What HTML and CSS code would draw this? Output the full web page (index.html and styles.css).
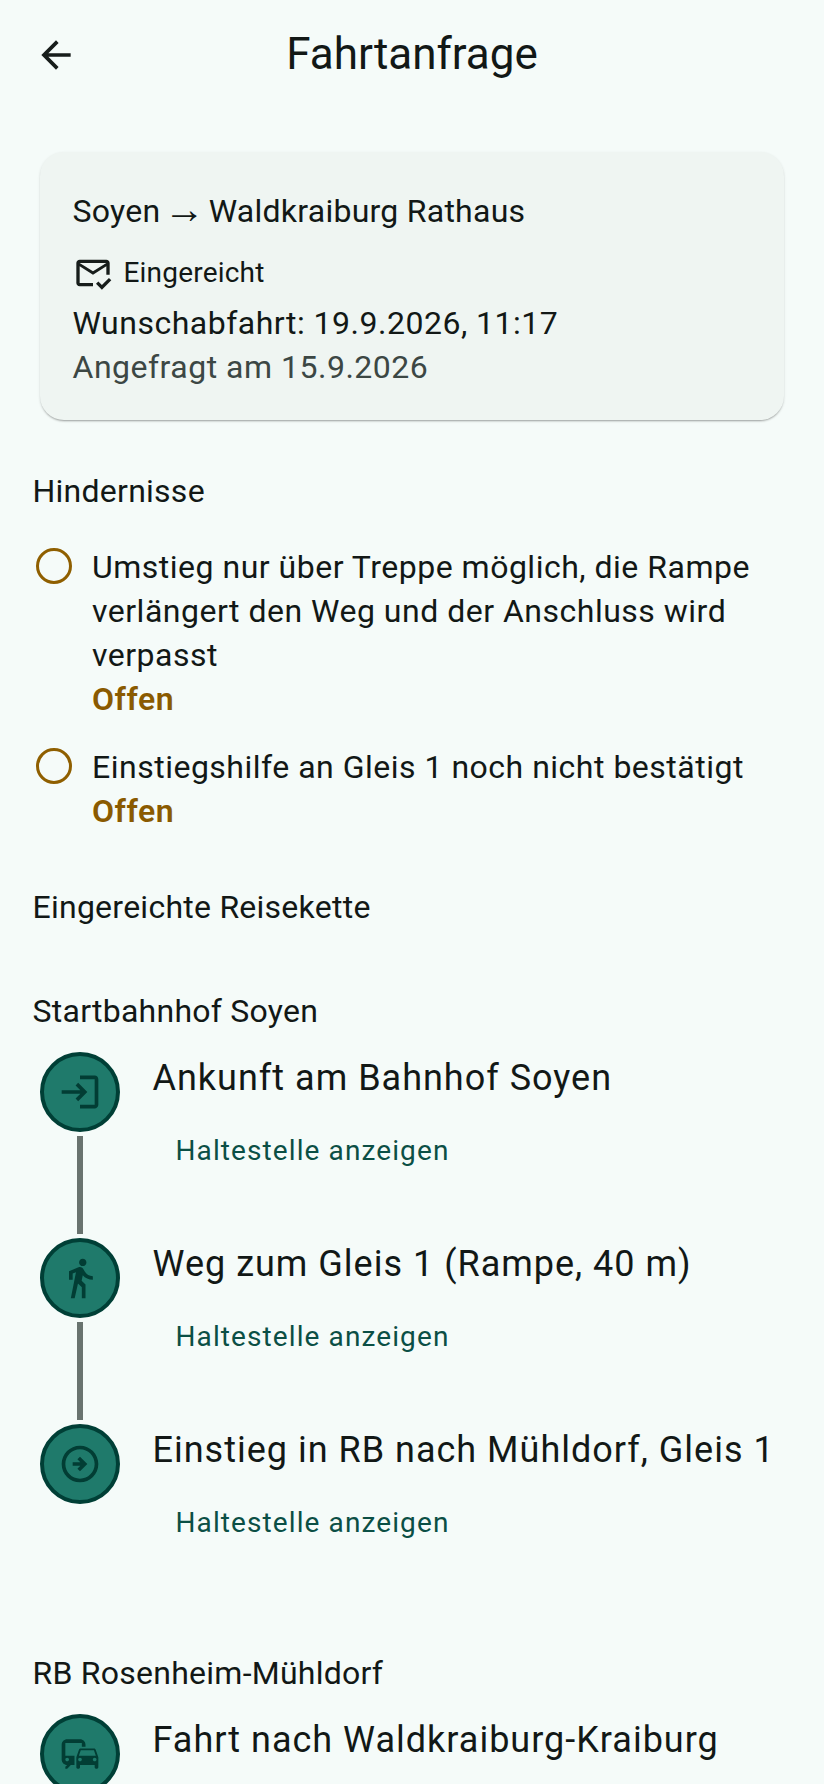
FILE: index.html
```html
<!DOCTYPE html>
<html lang="de">
<head>
	<meta charset="utf-8">
	<meta name="viewport" content="width=device-width, initial-scale=1">
	<title>Fahrtanfrage</title>
	<link rel="stylesheet" href="styles.css">
</head>
<body>
	<div class="page">
		<header class="topbar">
			<svg class="back" viewBox="0 0 24 24"><path d="M20 11H7.83l5.59-5.59L12 4l-8 8 8 8 1.41-1.41L7.83 13H20z"/></svg>
			<h1>Fahrtanfrage</h1>
		</header>

		<section class="card">
			<div class="route">Soyen <span class="arrow">→</span> Waldkraiburg Rathaus</div>
			<div class="status">
				<svg viewBox="0 0 24 24"><path d="M12 18H4V8l8 5 8-5v5h2V6c0-1.1-.9-2-2-2H4c-1.1 0-2 .9-2 2v12c0 1.100.9 2 2 2h8v-2zm8-12-8 5-8-5h16zm-2.660 16-3.540-3.540 1.410-1.410 2.120 2.120 4.240-4.240 1.410 1.410L17.340 22z"/></svg>
				<span>Eingereicht</span>
			</div>
			<div class="wish">Wunschabfahrt: 19.9.2026, 11:17</div>
			<div class="asked">Angefragt am 15.9.2026</div>
		</section>

		<h2 class="heading">Hindernisse</h2>
		<div class="obstacle">
			<span class="ring"></span>
			<div class="obstacle-text">
				Umstieg nur über Treppe möglich, die Rampe verlängert den Weg und der Anschluss wird verpasst
				<strong>Offen</strong>
			</div>
		</div>
		<div class="obstacle">
			<span class="ring"></span>
			<div class="obstacle-text">
				Einstiegshilfe an Gleis 1 noch nicht bestätigt
				<strong>Offen</strong>
			</div>
		</div>

		<h2 class="heading chain">Eingereichte Reisekette</h2>

		<h2 class="heading group">Startbahnhof Soyen</h2>
		<div class="step">
			<div class="rail">
				<div class="dot">
					<svg viewBox="0 0 24 24"><path d="M11 7 9.600 8.400l2.600 2.600H2v2h10.200l-2.600 2.600L11 17l5-5-5-5zm9 12h-8v2h8c1.100 0 2-.9 2-2V5c0-1.100-.9-2-2-2h-8v2h8v14z"/></svg>
				</div>
				<div class="line"></div>
			</div>
			<div class="step-body">
				<div class="step-title">Ankunft am Bahnhof Soyen</div>
				<div class="link">Haltestelle anzeigen</div>
			</div>
		</div>
		<div class="step">
			<div class="rail">
				<div class="dot">
					<svg viewBox="0 0 24 24"><path d="M13.500 5.500c1.100 0 2-.9 2-2s-.9-2-2-2-2 .9-2 2 .9 2 2 2zM9.800 8.900 7 23h2.100l1.800-8 2.100 2v6h2v-7.500l-2.100-2 .6-3C14.800 12 16.800 13 19 13v-2c-1.900 0-3.500-1-4.300-2.400l-1-1.600c-.4-.6-1-1-1.700-1-.3 0-.5.1-.8.1L6 8.300V13h2V9.600l1.800-.7"/></svg>
				</div>
				<div class="line"></div>
			</div>
			<div class="step-body">
				<div class="step-title">Weg zum Gleis 1 (Rampe, 40 m)</div>
				<div class="link">Haltestelle anzeigen</div>
			</div>
		</div>
		<div class="step">
			<div class="rail">
				<div class="dot">
					<svg viewBox="0 0 24 24"><path d="M12 4c4.410 0 8 3.590 8 8s-3.590 8-8 8-8-3.590-8-8 3.590-8 8-8m0-2C6.480 2 2 6.480 2 12s4.480 10 10 10 10-4.480 10-10S17.520 2 12 2zm0 6-1.410 1.410L12.170 11H8v2h4.170l-1.580 1.590L12 16l4-4z"/></svg>
				</div>
			</div>
			<div class="step-body">
				<div class="step-title">Einstieg in RB nach Mühldorf, Gleis 1</div>
				<div class="link">Haltestelle anzeigen</div>
			</div>
		</div>

		<h2 class="heading group second">RB Rosenheim-Mühldorf</h2>
		<div class="step">
			<div class="rail">
				<div class="dot">
					<svg viewBox="0 0 24 24"><path d="M12 4H5C3.340 4 2 5.340 2 7v8c0 1.660 1.340 3 3 3l-1 1v1h1l2-2.030L9 18v-5H4V5.980L13 6v2h2V7c0-1.660-1.340-3-3-3zM5 14c.55 0 1 .45 1 1s-.45 1-1 1-1-.45-1-1 .45-1 1-1zm15.570-4.340c-.14-.4-.52-.66-.97-.66h-7.190c-.46 0-.83.26-.98.66L10 13.770l.01 5.510c0 .38.31.72.69.72h.62c.38 0 .68-.38.68-.76V18h8v1.240c0 .38.31.76.69.76h.61c.38 0 .69-.34.69-.72l.01-1.370v-4.140l-1.430-4.110zm-8.160.34h7.190l1.030 3h-9.250l1.030-3zM12 16c-.55 0-1-.45-1-1s.45-1 1-1 1 .45 1 1-.45 1-1 1zm8 0c-.55 0-1-.45-1-1s.45-1 1-1 1 .45 1 1-.45 1-1 1z"/></svg>
				</div>
			</div>
			<div class="step-body">
				<div class="step-title">Fahrt nach Waldkraiburg-Kraiburg</div>
			</div>
		</div>
	</div>
</body>
</html>
```

FILE: styles.css
```css
html, body {
	margin: 0;
	height: 100%;
}
body {
	background: #f5fbf9;
	color: #121816;
	font-family: Roboto, "Noto Sans", sans-serif;
	overflow: hidden;
}
.page {
	height: 1784px;
	overflow: hidden;
}
.topbar {
	display: flex;
	align-items: center;
	justify-content: center;
	position: relative;
	height: 108px;
}
.back {
	position: absolute;
	left: 34px;
	top: 33px;
	width: 44px;
	height: 44px;
	fill: #171d1b;
}
h1 {
	margin: 0;
	font-size: 44px;
	font-weight: 400;
}
.card {
	margin: 44px 40px 0;
	padding: 28px 32.5px 0;
	height: 268px;
	box-sizing: border-box;
	background: #eff5f2;
	border-radius: 24px;
	box-shadow: 0 2px 2px -1px rgba(0,0,0,.3), 0 1px 3px rgba(0,0,0,.1);
}
.route {
	padding-top: 9px;
	font-size: 32px;
	line-height: 44px;
	letter-spacing: .25px;
}
.arrow {
	margin: 0 -4.5px;
	font-size: 41px;
	line-height: 0;
	letter-spacing: 0;
	vertical-align: -1px;
}
.status {
	display: flex;
	align-items: center;
	gap: 11px;
	margin-top: 18px;
	font-size: 28px;
	line-height: 44px;
	letter-spacing: .2px;
}
.status svg {
	width: 40px;
	height: 40px;
	fill: #171d1b;
}
.wish {
	font-size: 32px;
	line-height: 44px;
	letter-spacing: .5px;
	margin-top: 6px;
}
.asked {
	font-size: 32px;
	line-height: 44px;
	letter-spacing: .5px;
	color: #3c4744;
}
.heading {
	margin: 0 32.5px;
	font-size: 32px;
	font-weight: 400;
	line-height: 40px;
	letter-spacing: .25px;
}
.card + .heading {
	margin-top: 51px;
}
.obstacle {
	display: flex;
	margin: 0 33px;
}
.card + .heading + .obstacle {
	margin-top: 34px;
}
.obstacle + .obstacle {
	margin-top: 24px;
}
.ring {
	flex: none;
	width: 36px;
	height: 36px;
	box-sizing: border-box;
	margin: 3px 20px 0 3px;
	border: 3.7px solid #8f5f00;
	border-radius: 50%;
}
.obstacle-text {
	font-size: 32px;
	line-height: 44px;
	letter-spacing: .5px;
}
.obstacle-text strong {
	display: block;
	color: #8a5a00;
	font-weight: 600;
}
.chain {
	margin-top: 54px;
}
.group {
	margin-top: 64px;
}
.group.second {
	margin-top: 43px;
}
.step {
	display: flex;
	margin: 0 40px;
	height: 186px;
}
.group + .step {
	margin-top: 21px;
}
.rail {
	display: flex;
	flex-direction: column;
	align-items: center;
	width: 80px;
}
.dot {
	flex: none;
	display: flex;
	align-items: center;
	justify-content: center;
	width: 80px;
	height: 80px;
	box-sizing: border-box;
	background: #1f7a6b;
	border: 4px solid #003f36;
	border-radius: 50%;
}
.dot svg {
	width: 44px;
	height: 44px;
	fill: #023d34;
}
.line {
	width: 6px;
	height: 98px;
	margin-top: 4px;
	background: #69736f;
}
.step-body {
	margin-left: 32.5px;
}
.step-title {
	font-size: 36px;
	line-height: 52px;
	letter-spacing: 1px;
	white-space: nowrap;
}
.link {
	margin: 27px 0 0 23px;
	font-size: 28px;
	line-height: 40px;
	color: #0b4f45;
	letter-spacing: 1.1px;
}
```
